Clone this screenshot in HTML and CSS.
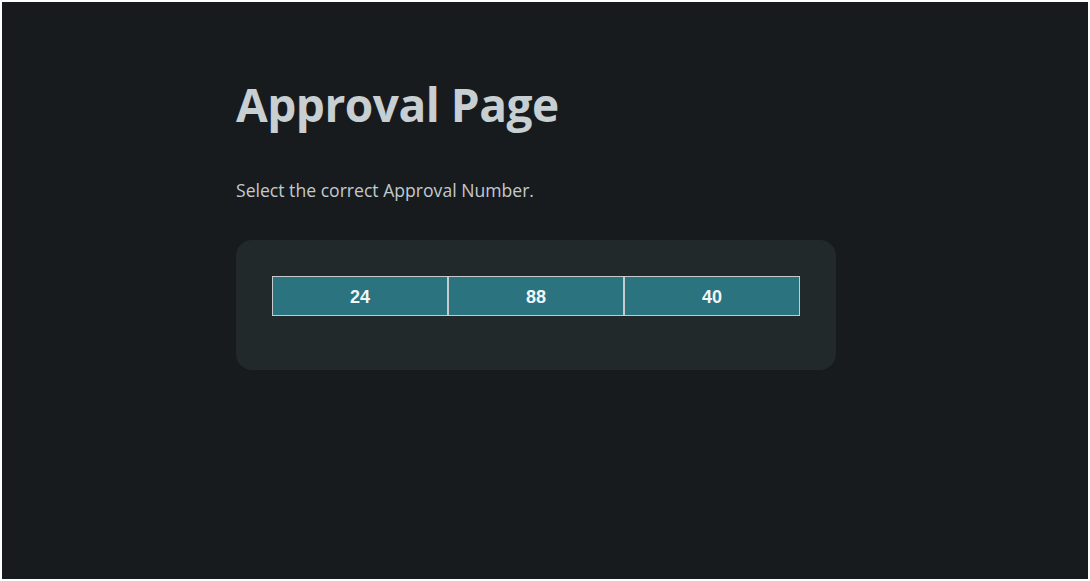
FILE: index.html
```html
<!DOCTYPE html>
<html lang="en">
<head>
<meta charset="utf-8">
<title>Approval Page</title>
<link rel="stylesheet" href="styles.css">
</head>
<body>
<main class="page">
  <h1 class="title">Approval Page</h1>
  <p class="lead">Select the correct Approval Number.</p>
  <section class="card">
    <div class="choices">
      <button class="choice" type="button">24</button>
      <button class="choice" type="button">88</button>
      <button class="choice" type="button">40</button>
    </div>
  </section>
</main>
</body>
</html>
```
FILE: styles.css
```css
html {
  background: #ffffff;
  height: 100%;
}
body {
  margin: 0;
  height: 100%;
  box-sizing: border-box;
  border: 2px solid #ffffff;
  background: #181b1d;
  font-family: "Open Sans", "Noto Sans", sans-serif;
  color: #c9d1d3;
}
.page {
  padding: 72px 0 0 234px;
  width: 600px;
}
.title {
  margin: 0;
  font-size: 46px;
  font-weight: 700;
  line-height: 60px;
  color: #c7cfd2;
  letter-spacing: -0.5px;
}
.lead {
  margin: 44px 0 0;
  font-size: 17.6px;
  line-height: 24px;
  color: #c3cacd;
}
.card {
  margin-top: 38px;
  background: #22292b;
  border-radius: 16px;
  padding: 36px 36px 54px;
}
.choices {
  display: flex;
}
.choice {
  flex: 1;
  height: 40px;
  margin: 0;
  padding: 2px 0 0;
  background: #2c7380;
  border: 1px solid #c5cbcb;
  color: #f2f5f5;
  font-family: "Liberation Sans", Arial, sans-serif;
  font-weight: 700;
  font-size: 18px;
  cursor: pointer;
}
```
